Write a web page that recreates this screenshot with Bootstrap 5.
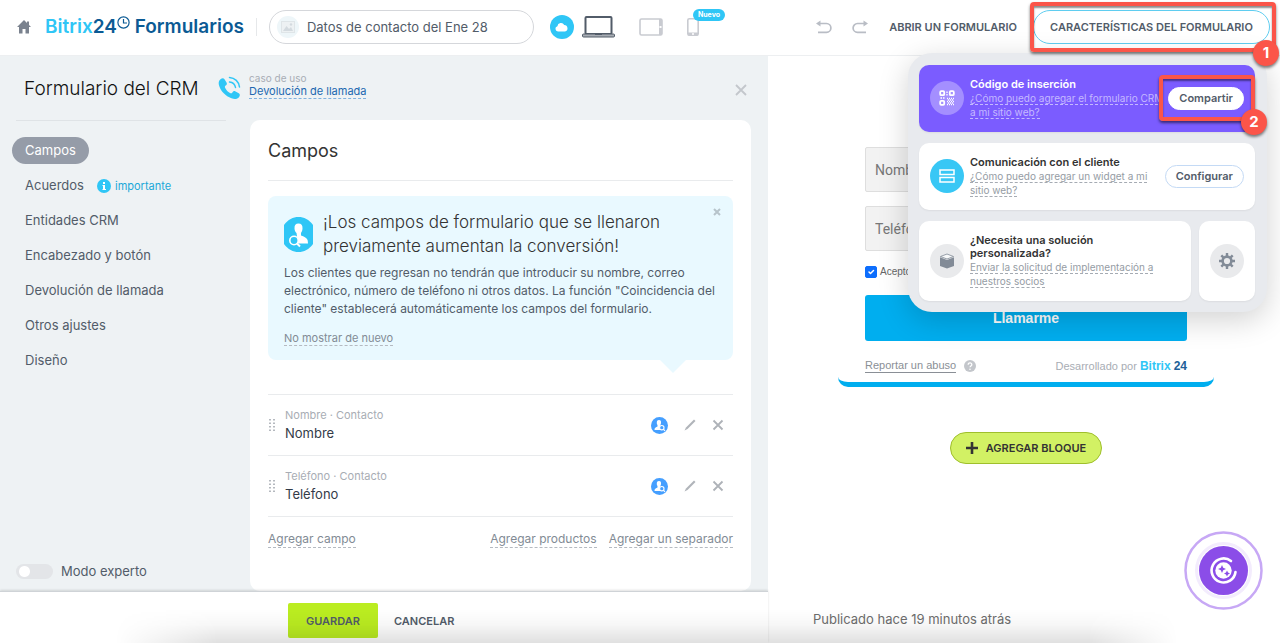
<!DOCTYPE html>
<html lang="es">
<head>
<meta charset="utf-8">
<meta name="viewport" content="width=device-width, initial-scale=1">
<title>Bitrix24 Formularios</title>
<link href="https://cdn.jsdelivr.net/npm/bootstrap@5.3.0/dist/css/bootstrap.min.css" rel="stylesheet">
<style>
  body { font-family: Inter, "Liberation Sans", sans-serif; font-size: 13px; line-height: 18px; color: #525c69; }
  button { font-family: inherit; }
  .topbar { height: 56px; padding: 0 10px 2px 16px; border-bottom: 1px solid #edeff1; }
  .brand { font-size: 19px; line-height: 24px; font-weight: 600; color: #0b5a94; margin-left: 13px; }
  .light-part { color: #2fc6f6; }
  .brand svg { vertical-align: 4px; }
  .split { width: 1px; height: 18px; background: #e6e8ea; margin: 0 12px; }
  .name-box { width: 265px; height: 34px; border: 1px solid #d5d7db; border-radius: 17px; padding-left: 7px; }
  .name-box input { border: 0; outline: 0; padding: 0; color: #525c69; background: none; min-width: 0; }
  .thumb { width: 22px; height: 22px; border-radius: 50%; background: #eef6f9; }
  .cloud { width: 24px; height: 24px; background: #2fc6f6; }
  .phone-new { left: 6px; top: -9px; font-size: 7px; line-height: 12px; padding: 0 5px; font-weight: 700; background: #2fc6f6; color: #fff; border-radius: 6px; }
  .caps { font-size: 11px; line-height: 16px; font-weight: 600; color: #525c69; }
  .history { gap: 20px; margin-right: 21px; }
  .feature-btn { height: 34px; width: 237px; border: 1px solid #5fcdf0; border-radius: 17px; background: #fff; }
  .mark-box { border: 4px solid #fb5549; border-radius: 4px; box-shadow: 0 2px 3px rgba(0,0,0,.55), inset 0 2px 2px rgba(0,0,0,.45); pointer-events: none; }
  .mark-one { inset: -8px -6px -8px -3px; z-index: 6; }
  .mark-two { inset: -12px -11px -11px -9px; }
  .mark-num { width: 26px; height: 26px; border-radius: 50%; background: #fb5549; color: #fff; font-size: 15px; font-weight: 700; box-shadow: 0 2px 3px rgba(0,0,0,.5); right: -16px; bottom: -18px; }
  .mark-one .mark-num { right: -7px; }
  .editor { width: 60%; }
  .editor-body { background: #eef2f4; }
  .preview { width: 40%; }
  .side { width: 250px; }
  .side-nav .nav-link { font-size: 13px; line-height: 19px; padding: 4px 13px; color: #525c69; border-radius: 14px; }
  .side-nav .nav-link.active { background: #959ca8; color: #fff; }
  .imp { font-size: 11px; line-height: 16px; color: #1ba8d8; }
  .title { font-size: 19px; line-height: 26px; font-weight: 300; color: #111; }
  .side-title { padding: 20px 0 0 24px; height: 64px; }
  .rule { height: 1px; background: #dfe3e6; }
  .rule-light { background: #e9ebed; }
  .case-top { height: 64px; padding: 16px 21px 0 0; }
  .case-top > svg { margin-left: -32px; }
  .tiny { font-size: 10px; line-height: 13px; color: #a8adb4; }
  .dash { text-decoration: none; border-bottom: 1px dashed #b5bac1; color: #828b95; }
  .case-link { display: block; font-size: 11px; line-height: 13px; color: #2067b0; border-color: #7fb2e0; }
  .bare { border: 0; background: none; padding: 0; line-height: 0; }
  .sheet { background: #fff; border-radius: 10px; padding: 18px 18px 0; margin-right: 17px; }
  .sheet-title { font-size: 18px; line-height: 26px; font-weight: 400; color: #333; }
  .tip { background: #e9f9ff; border-radius: 8px; margin: 15px 0 34px; padding: 14px 16px; }
  .tip::after { content: ""; position: absolute; right: 47px; top: 100%; border: 13px solid transparent; border-top-color: #e9f9ff; border-bottom: 0; }
  .tip-title { font-size: 17px; line-height: 24px; font-weight: 300; color: #333; margin-left: 10px; }
  .tip-text { font-size: 12px; line-height: 18px; margin: 6px 0 10px; }
  .later { font-size: 11px; line-height: 16px; }
  .field { border-top: 1px solid #e9ebed; height: 61px; padding-right: 9px; }
  .f-main { margin-left: 9px; }
  .f-tools { gap: 16px; }
  .f-cap { font-size: 11px; line-height: 16px; color: #a8adb4; }
  .f-name { font-size: 13px; line-height: 20px; color: #333b48; }
  .add-links { border-top: 1px solid #e9ebed; padding-top: 14px; gap: 12px; }
  .add-links a { font-size: 12px; line-height: 16px; }
  .expert { padding: 0 0 11px 16px; }
  .expert .form-check-input { width: 37px; height: 15px; margin: 0; border: 0; background-color: #e3e5e8; background-image: radial-gradient(circle, #fff 5px, transparent 6px); background-size: 15px 15px; background-position: 1px center; background-repeat: no-repeat; }
  .actions { height: 52px; border-top: 1px solid #cfd3d7; box-shadow: 0 -1px 2px rgba(0,0,0,.12); background: #fff; padding: 6px 0 0 288px; }
  .save { width: 90px; height: 35px; border: 0; border-radius: 2px; background: #bbed21; }
  .shade { left: 0; right: 0; bottom: 0; height: 34px; pointer-events: none; background: linear-gradient(to top, rgba(0,0,0,.12), rgba(0,0,0,.03) 55%, transparent); -webkit-mask-image: linear-gradient(to right, transparent 9%, #000 17%, #000 85%, transparent 92%); mask-image: linear-gradient(to right, transparent 9%, #000 17%, #000 85%, transparent 92%); }
  .form-card { width: 376px; height: 331px; margin-left: 4px; padding: 91px 27px 0; border-bottom: 5px solid #00aeef; border-radius: 10px; }
  .form-card .form-control { height: 45px; font-size: 14px; padding: 0 9px; border: 1px solid #dedede; border-radius: 2px; background: #f2f2f2; font-family: Roboto, sans-serif; margin-bottom: 14px; }
  .form-card .form-control::placeholder { color: #777; }
  .form-card .form-check-input { width: 12px; height: 12px; margin: 0; border-radius: 2px; }
  .agree { font: 10px/14px "Liberation Sans", sans-serif; color: #666; margin-left: 3px; }
  .call { height: 46px; border: 0; border-radius: 3px; background: #00aeef; color: #fff; font: 700 14px/20px "Liberation Sans", sans-serif; margin: 16px 0 18px; }
  .foot-text { font: 11px/13px "Liberation Sans", sans-serif; color: #a8adb4; }
  .foot-text b { font-size: 12px; }
  .dark-part { color: #215f98; }
  .report { color: #8a8f96; text-decoration: none; border-bottom: 1px solid #8a8f96; }
  .add-block { width: 152px; height: 32px; border: 1px solid #9fbf2c; border-radius: 16px; background: #d2f164; color: #333; margin: 45px 0 0 4px; }
  .published { margin: 0 0 15px 45px; color: #6d6d6d; }
  .menu-pop { top: 43px; right: 3px; width: 359px; padding: 12px 12px 11px 11px; gap: 11px; border-radius: 24px; background: #e8eaee; box-shadow: 0 8px 30px rgba(0,0,0,.18); z-index: 5; }
  .tile { background: #fff; border-radius: 10px; height: 67px; padding: 0 11px; box-shadow: 0 1px 2px rgba(0,0,0,.06); }
  .tile.tall { height: 80px; }
  .tile.violet { background: #7b5cff; }
  .disc { width: 34px; height: 34px; border-radius: 50%; background: #e9eaec; flex: none; }
  .disc-violet { background: #a48fff; }
  .disc-cyan { background: #38c7f5; }
  .tile-body { margin-left: 6px; flex: 1 1 0; min-width: 0; }
  .tile-title { font-size: 11px; line-height: 13px; font-weight: 600; color: #333; }
  .tile-link { font-size: 10px; line-height: 14px; color: #959ca4; white-space: nowrap; }
  .tile-link a { color: inherit; text-decoration: none; border-bottom: 1px dashed #a5abb3; }
  .violet .tile-title { color: #fff; }
  .violet .tile-link { color: #c5b9ff; }
  .violet .tile-link a { border-color: #c5b9ff; }
  .pill { height: 23px; border: 1px solid #c4daf5; border-radius: 12px; background: #fff; color: #525c69; font-size: 11px; line-height: 16px; font-weight: 600; padding: 0 10px; }
  .violet .pill { border-color: #fff; }
  .assistant { right: 17px; bottom: 33px; }
</style>
</head>
<body class="d-flex flex-column min-vh-100 bg-white position-relative">
<header class="topbar d-flex align-items-center position-relative">
  <a href="#" class="lh-1" aria-label="Inicio"><svg width="16" height="16" viewBox="0 0 16 16" fill="#7a828e"><path d="M8 1 1 8h2v6.500h3.500V10h3v4.500H13V8h2l-2-2V2.500h-2V4z"/></svg></a>
  <div class="brand text-nowrap"><span class="light-part">Bitrix</span>24<svg width="13" height="13" viewBox="0 0 13 13" fill="none" stroke="#0b5a94" stroke-width="1.200"><circle cx="6.500" cy="6.500" r="5.600"/><path d="M6.500 3v4H10"/></svg> Formularios</div>
  <div class="split"></div>
  <div class="name-box d-flex align-items-center gap-2">
    <span class="thumb d-flex align-items-center justify-content-center"><svg width="14" height="12" viewBox="0 0 14 12"><rect x=".5" y=".5" width="13" height="11" fill="#edf1f3" stroke="#dfe5e8"/><path d="M2 10l3.500-5 2.500 3 2-2 2 4z" fill="#d3dadf"/><circle cx="10" cy="3.500" r="1.200" fill="#d3dadf"/></svg></span>
    <input class="flex-fill" type="text" value="Datos de contacto del Ene 28" aria-label="Nombre del formulario">
  </div>
  <span class="cloud rounded-circle d-flex align-items-center justify-content-center ms-3"><svg width="13" height="10" viewBox="0 0 13 10" fill="#fff"><path d="M3 9.500a2.700 2.700 0 0 1-.6-5.300A3.600 3.600 0 0 1 9.200 3 3.300 3.300 0 0 1 10 9.500z"/></svg></span>
  <div class="d-flex align-items-center ms-2">
    <button class="bare" aria-label="Escritorio"><svg width="33" height="22" viewBox="0 0 33 22" fill="none" stroke="#525c69"><rect x="3.500" y="1" width="26" height="17" rx="1" stroke-width="2"/><rect x=".5" y="18" width="32" height="3" rx="1" fill="#a8adb4"/><path d="M13 18.500h7"/></svg></button>
    <button class="bare ms-4" aria-label="Tableta"><svg width="24" height="18" viewBox="0 0 24 18" fill="none" stroke="#c9cbd1"><rect x="1" y="1" width="22" height="16" rx="1.500" stroke-width="1.600"/><path d="M21.500 1v16" stroke-width="3"/><path d="M20.500 9h2" stroke="#fff" stroke-width="2"/></svg></button>
    <button class="bare ms-4 position-relative" aria-label="Teléfono"><svg width="12" height="18" viewBox="0 0 12 18" fill="none" stroke="#c9cbd1"><rect x=".8" y=".8" width="10.400" height="16.400" rx="1.500" stroke-width="1.600"/><path d="M1 16h10" stroke-width="3"/><path d="M5 16h2" stroke="#fff" stroke-width="1.500"/></svg><span class="phone-new position-absolute">Nuevo</span></button>
  </div>
  <div class="d-flex align-items-center ms-auto">
    <div class="history d-flex">
      <button class="bare" aria-label="Deshacer"><svg width="16" height="14" viewBox="0 0 16 14" fill="none" stroke="#b9bdc5" stroke-width="1.700"><path d="M2 3.500h8.500a4.400 4.400 0 0 1 0 8.800H2"/><path d="M4.500.5v6L0 3.500z" fill="#b9bdc5" stroke="none"/></svg></button>
      <button class="bare" aria-label="Rehacer"><svg width="16" height="14" viewBox="0 0 16 14" fill="none" stroke="#b9bdc5" stroke-width="1.700"><path d="M14 3.500H5.500a4.400 4.400 0 0 0 0 8.800H14"/><path d="M11.500.5v6l4.500-3z" fill="#b9bdc5" stroke="none"/></svg></button>
    </div>
    <button class="bare caps">ABRIR UN FORMULARIO</button>
    <div class="position-relative ms-3">
      <button class="feature-btn caps">CARACTERÍSTICAS DEL FORMULARIO</button>
      <div class="menu-pop position-absolute d-flex flex-column">
        <section class="tile violet d-flex align-items-center">
          <span class="disc disc-violet d-flex align-items-center justify-content-center"><svg width="16" height="16" viewBox="0 0 16 16" fill="none" stroke="#fff" stroke-width="1.800"><rect x="1.200" y="1.200" width="4" height="4" rx="1"/><rect x="10.800" y="1.200" width="4" height="4" rx="1"/><rect x="1.200" y="10.800" width="4" height="4" rx="1"/><path d="M8 1.500v1.500M8 4v1.500M1.500 8H3M4 8h1.500M8 8.500h1M10 8.500h1M12 8.500h1M14 8.500h1M9 10h1M11 10h1M13 10h1M8 11.500h1M10 11.500h1M12 11.500h1M14 11.500h1M9 13h1M11 13h1M13 13h1M8 14.500h1M10 14.500h1M12 14.500h1M14 14.500h1" stroke-width="1.300"/></svg></span>
          <div class="tile-body"><div class="tile-title">Código de inserción</div><div class="tile-link"><a href="#">¿Cómo puedo agregar el formulario CRM<br>a mi sitio web?</a></div></div>
          <div class="position-relative"><button class="pill d-block">Compartir</button><div class="mark-box mark-two position-absolute"><span class="mark-num position-absolute d-flex align-items-center justify-content-center">2</span></div></div>
        </section>
        <section class="tile d-flex align-items-center">
          <span class="disc disc-cyan d-flex align-items-center justify-content-center"><svg width="16" height="14" viewBox="0 0 16 14" fill="none" stroke="#fff" stroke-width="1.500"><rect x="1" y="1" width="14" height="4.500"/><rect x="1" y="8.500" width="14" height="4.500"/></svg></span>
          <div class="tile-body"><div class="tile-title">Comunicación con el cliente</div><div class="tile-link"><a href="#">¿Cómo puedo agregar un widget a mi<br>sitio web?</a></div></div>
          <button class="pill">Configurar</button>
        </section>
        <div class="d-flex gap-2">
          <section class="tile tall d-flex align-items-center flex-fill">
            <span class="disc d-flex align-items-center justify-content-center"><svg width="16" height="16" viewBox="0 0 16 16" fill="#828b97"><path d="M1 4.200 8 7v8.500L1 13z"/><path d="M15 4.200 8 7v8.500L15 13z"/><path d="M1.500 3.500 8 1l6.500 2.500L8 6z" fill="#f7f8f9" stroke="#828b97" stroke-width=".8"/></svg></span>
            <div class="tile-body"><div class="tile-title">¿Necesita una solución<br>personalizada?</div><div class="tile-link"><a href="#">Enviar la solicitud de implementación a<br>nuestros socios</a></div></div>
          </section>
          <button class="tile tall border-0 d-flex align-items-center" aria-label="Ajustes"><span class="disc d-flex align-items-center justify-content-center"><svg width="16" height="16" viewBox="0 0 16 16" fill="none" stroke="#828b97"><circle cx="8" cy="8" r="4.400" stroke-width="2.600"/><path d="M8 0v3M8 13v3M0 8h3M13 8h3M2.300 2.300l2 2M11.700 11.700l2 2M13.700 2.300l-2 2M2.300 13.700l2-2" stroke-width="2.400"/></svg></span></button>
        </div>
      </div>
      <div class="mark-box mark-one position-absolute"><span class="mark-num position-absolute d-flex align-items-center justify-content-center">1</span></div>
    </div>
  </div>
</header>
<main class="d-flex flex-fill">
  <div class="editor d-flex flex-column">
    <div class="editor-body d-flex flex-fill">
      <aside class="side d-flex flex-column flex-shrink-0">
        <h1 class="title side-title m-0">Formulario del CRM</h1>
        <div class="rule ms-3 me-4"></div>
        <nav class="side-nav nav flex-column align-items-start gap-2 mt-3 ms-2 ps-1">
          <a class="nav-link active" href="#">Campos</a>
          <div class="d-flex align-items-center"><a class="nav-link" href="#">Acuerdos</a><svg width="14" height="14" viewBox="0 0 14 14"><circle cx="7" cy="7" r="7" fill="#2fc6f6"/><path d="M6 3h2v2H6zM5.500 6H8v4h1v1H5.500v-1H6V7h-.5z" fill="#fff"/></svg><span class="imp ps-1">importante</span></div>
          <a class="nav-link" href="#">Entidades CRM</a>
          <a class="nav-link" href="#">Encabezado y botón</a>
          <a class="nav-link" href="#">Devolución de llamada</a>
          <a class="nav-link" href="#">Otros ajustes</a>
          <a class="nav-link" href="#">Diseño</a>
        </nav>
        <div class="expert mt-auto d-flex align-items-center gap-2"><input class="form-check-input rounded-pill" type="checkbox" role="switch" id="exp"><label for="exp">Modo experto</label></div>
      </aside>
      <section class="flex-fill d-flex flex-column">
        <div class="case-top d-flex">
          <svg width="23" height="24" viewBox="0 0 23 24" class="flex-shrink-0 mt-1"><path d="M2.500 3.200C4 2 5.500 1.800 6.500 3.200l2 3.200c.7 1.200.4 2.200-.8 3.100-1 .8-1 1.500-.5 2.500 1.200 2.300 2.600 3.900 4.800 5 1 .5 1.700.4 2.400-.6.800-1.200 1.900-1.600 3.100-1l3.300 1.900c1.400.9 1.300 2.400.3 3.700-1.700 2.200-4.500 2.500-7.600 1.300C7.500 20 3 15.500 1.200 10 .2 7 .6 4.800 2.500 3.200z" fill="#2fc6f6"/><path d="M11.500 6c3.300.3 5.500 2.500 6 5.500M11.500 1.500c5.300.3 9.500 4.200 10 9.500" fill="none" stroke="#2fc6f6" stroke-width="1.500" stroke-linecap="round"/></svg>
          <div class="ms-2"><div class="tiny">caso de uso</div><a class="dash case-link" href="#">Devolución de llamada</a></div>
          <button class="bare ms-auto mt-2 align-self-start pt-1" aria-label="Cerrar"><svg width="12" height="12" viewBox="0 0 12 12" stroke="#c3c7cc" stroke-width="1.800"><path d="M1 1l10 10M11 1 1 11"/></svg></button>
        </div>
        <div class="sheet flex-fill">
          <h2 class="sheet-title mb-3">Campos</h2>
          <div class="rule rule-light"></div>
          <div class="tip position-relative">
            <button class="bare position-absolute top-0 end-0 mt-2 me-2 p-1" aria-label="Cerrar aviso"><svg width="8" height="8" viewBox="0 0 8 8" stroke="#b7c4cb" stroke-width="2"><path d="M1 1l6 6M7 1 1 7"/></svg></button>
            <div class="d-flex align-items-center">
              <svg class="flex-shrink-0" width="29" height="35" viewBox="0 0 29 35"><path d="M0 8C4 2.500 9 0 14.500 0S25 2.500 29 8v19c-4 5.500-9 8-14.500 8S4 32.500 0 27z" fill="#2fc6f6"/><path d="M14.500 6.500c2.800 0 4.200 1.800 4 5-.1 2.300-.8 3.300-1.500 4.500v2.500c4 1.500 6.300 2.500 6.700 5l.3 3H14L12.500 16c-1-1-1.900-2.500-2-4.500-.2-3.200 1.200-5 4-5z" fill="#fff"/><circle cx="10" cy="23.500" r="4.200" fill="#2fc6f6" stroke="#fff" stroke-width="1.600"/><path d="M13 26.500l3 3" stroke="#fff" stroke-width="2"/></svg>
              <div class="tip-title">¡Los campos de formulario que se llenaron<br>previamente aumentan la conversión!</div>
            </div>
            <p class="tip-text">Los clientes que regresan no tendrán que introducir su nombre, correo electrónico, número de teléfono ni otros datos. La función "Coincidencia del cliente" establecerá automáticamente los campos del formulario.</p>
            <a class="dash later" href="#">No mostrar de nuevo</a>
          </div>
          <div class="field d-flex align-items-center">
            <svg width="8" height="14" viewBox="0 0 8 14" fill="#b5b9bf"><path d="M1 1h2v1.500H1zM5 1h2v1.500H5zM1 4.500h2V6H1zM5 4.500h2V6H5zM1 8h2v1.500H1zM5 8h2v1.500H5zM1 11.500h2V13H1zM5 11.500h2V13H5z"/></svg>
            <div class="f-main flex-fill"><div class="f-cap">Nombre · Contacto</div><div class="f-name">Nombre</div></div>
            <div class="f-tools d-flex align-items-center">
              <svg width="17" height="17" viewBox="0 0 17 17"><circle cx="8.500" cy="8.500" r="8.500" fill="#459fff"/><path d="M8 3c1.700 0 2.200 1 2 3-.1 1.300-.4 1.500-.7 2v1.500L10 13H3.500c0-2 .5-2.500 3-3.500V8C6 7.500 5.900 7 5.800 6 5.700 4 6.300 3 8 3z" fill="#fff"/><circle cx="10.800" cy="10.700" r="2.200" fill="#459fff" stroke="#fff" stroke-width="1.100"/><path d="M12.500 12.300l1.500 1.500" stroke="#fff" stroke-width="1.200"/></svg>
              <button class="bare" aria-label="Editar"><svg width="12" height="12" viewBox="0 0 12 12" fill="#b0b4ba"><path d="M10 .5 11.500 2l-8 8L.5 11.500 2 8.500z"/></svg></button>
              <button class="bare" aria-label="Eliminar"><svg width="12" height="12" viewBox="0 0 12 12" stroke="#aeb2b8" stroke-width="1.800"><path d="M1.500 1.500l9 9M10.500 1.500l-9 9"/></svg></button>
            </div>
          </div>
          <div class="field d-flex align-items-center">
            <svg width="8" height="14" viewBox="0 0 8 14" fill="#b5b9bf"><path d="M1 1h2v1.500H1zM5 1h2v1.500H5zM1 4.500h2V6H1zM5 4.500h2V6H5zM1 8h2v1.500H1zM5 8h2v1.500H5zM1 11.500h2V13H1zM5 11.500h2V13H5z"/></svg>
            <div class="f-main flex-fill"><div class="f-cap">Teléfono · Contacto</div><div class="f-name">Teléfono</div></div>
            <div class="f-tools d-flex align-items-center">
              <svg width="17" height="17" viewBox="0 0 17 17"><circle cx="8.500" cy="8.500" r="8.500" fill="#459fff"/><path d="M8 3c1.700 0 2.200 1 2 3-.1 1.300-.4 1.500-.7 2v1.500L10 13H3.500c0-2 .5-2.500 3-3.500V8C6 7.500 5.900 7 5.800 6 5.700 4 6.300 3 8 3z" fill="#fff"/><circle cx="10.800" cy="10.700" r="2.200" fill="#459fff" stroke="#fff" stroke-width="1.100"/><path d="M12.500 12.300l1.500 1.500" stroke="#fff" stroke-width="1.200"/></svg>
              <button class="bare" aria-label="Editar"><svg width="12" height="12" viewBox="0 0 12 12" fill="#b0b4ba"><path d="M10 .5 11.500 2l-8 8L.5 11.500 2 8.500z"/></svg></button>
              <button class="bare" aria-label="Eliminar"><svg width="12" height="12" viewBox="0 0 12 12" stroke="#aeb2b8" stroke-width="1.800"><path d="M1.500 1.500l9 9M10.500 1.500l-9 9"/></svg></button>
            </div>
          </div>
          <div class="add-links d-flex"><a class="dash me-auto" href="#">Agregar campo</a><a class="dash" href="#">Agregar productos</a><a class="dash" href="#">Agregar un separador</a></div>
        </div>
      </section>
    </div>
    <div class="actions d-flex align-items-center gap-3"><button class="save caps">GUARDAR</button><button class="bare caps">CANCELAR</button></div>
  </div>
  <div class="preview d-flex flex-column align-items-center">
    <form class="form-card d-flex flex-column">
      <input class="form-control flex-shrink-0" type="text" placeholder="Nombre" aria-label="Nombre">
      <input class="form-control flex-shrink-0" type="tel" placeholder="Teléfono" aria-label="Teléfono">
      <div class="d-flex align-items-center"><input class="form-check-input" type="checkbox" id="ok" checked><label class="agree" for="ok">Acepto</label></div>
      <button type="button" class="call flex-shrink-0">Llamarme</button>
      <div class="foot-text d-flex align-items-center"><a class="report" href="#">Reportar un abuso</a><svg class="ms-2" width="12" height="12" viewBox="0 0 12 12"><circle cx="6" cy="6" r="6" fill="#c3c6cb"/><path d="M4.200 4.700c0-2.500 3.700-2.300 3.600 0C7.800 6 6 6 6 7.300" fill="none" stroke="#fff" stroke-width="1.300"/><circle cx="6" cy="9.200" r=".8" fill="#fff"/></svg><span class="ms-auto">Desarrollado por <b class="light-part">Bitrix</b> <b class="dark-part">24</b></span></div>
    </form>
    <button class="add-block caps d-flex align-items-center justify-content-center gap-2"><svg width="12" height="12" viewBox="0 0 12 12" stroke="#333" stroke-width="2.600"><path d="M6 0v12M0 6h12"/></svg>AGREGAR BLOQUE</button>
    <div class="published mt-auto align-self-start">Publicado hace 19 minutos atrás</div>
  </div>
</main>
<div class="shade position-absolute"></div>
<button class="bare assistant position-fixed" aria-label="Asistente"><svg width="79" height="79" viewBox="0 0 79 79" fill="none"><circle cx="39.500" cy="39.500" r="38" stroke="#c7a8f5" stroke-width="2.500"/><circle cx="39.500" cy="39.500" r="27" stroke="#f3ecfd" stroke-width="3"/><circle cx="39.500" cy="39.500" r="24.500" fill="#8b4de8"/><path d="M47 30a12 12 0 1 0 4.500 11" stroke="#fff" stroke-width="2.600" stroke-linecap="round"/><circle cx="39.500" cy="39.500" r="8.200" fill="#fff"/><path d="M38 34l1.200 2.800L42 38l-2.800 1.200L38 42l-1.200-2.800L34 38l2.800-1.200zM43 39.500l1 2 2 1-2 1-1 2-1-2-2-1 2-1z" fill="#8b4de8"/></svg></button>
<script src="https://cdn.jsdelivr.net/npm/bootstrap@5.3.0/dist/js/bootstrap.bundle.min.js"></script>
</body>
</html>
